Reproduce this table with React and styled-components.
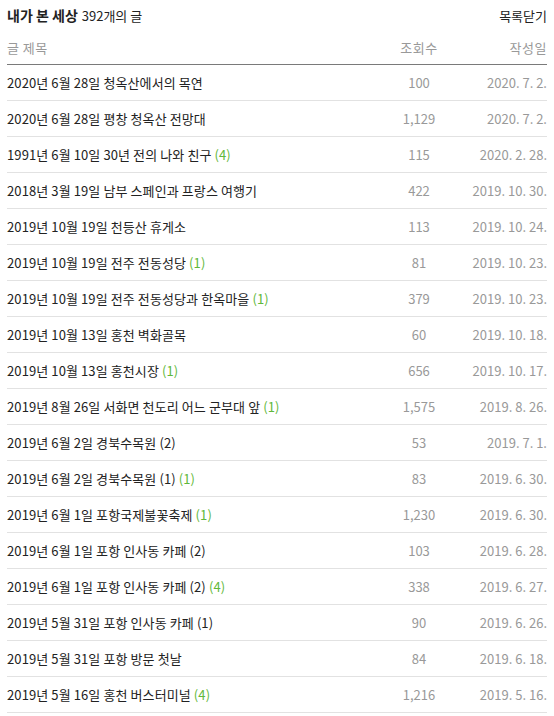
import styled, { createGlobalStyle } from 'styled-components';

const GlobalStyle = createGlobalStyle`
    body {
        margin: 0;
        background: #fff;
        font-family: "Noto Sans CJK KR", "Noto Sans", sans-serif;
        font-size: 13px;
        color: #333;
    }
`;

const posts = [
    { title: '2020년 6월 28일 청옥산에서의 목연', views: '100', date: '2020. 7. 2.' },
    { title: '2020년 6월 28일 평창 청옥산 전망대', views: '1,129', date: '2020. 7. 2.' },
    { title: '1991년 6월 10일 30년 전의 나와 친구', comments: 4, views: '115', date: '2020. 2. 28.' },
    { title: '2018년 3월 19일 남부 스페인과 프랑스 여행기', views: '422', date: '2019. 10. 30.' },
    { title: '2019년 10월 19일 천등산 휴게소', views: '113', date: '2019. 10. 24.' },
    { title: '2019년 10월 19일 전주 전동성당', comments: 1, views: '81', date: '2019. 10. 23.' },
    { title: '2019년 10월 19일 전주 전동성당과 한옥마을', comments: 1, views: '379', date: '2019. 10. 23.' },
    { title: '2019년 10월 13일 홍천 벽화골목', views: '60', date: '2019. 10. 18.' },
    { title: '2019년 10월 13일 홍천시장', comments: 1, views: '656', date: '2019. 10. 17.' },
    { title: '2019년 8월 26일 서화면 천도리 어느 군부대 앞', comments: 1, views: '1,575', date: '2019. 8. 26.' },
    { title: '2019년 6월 2일 경북수목원 (2)', views: '53', date: '2019. 7. 1.' },
    { title: '2019년 6월 2일 경북수목원 (1)', comments: 1, views: '83', date: '2019. 6. 30.' },
    { title: '2019년 6월 1일 포항국제불꽃축제', comments: 1, views: '1,230', date: '2019. 6. 30.' },
    { title: '2019년 6월 1일 포항 인사동 카페 (2)', views: '103', date: '2019. 6. 28.' },
    { title: '2019년 6월 1일 포항 인사동 카페 (2)', comments: 4, views: '338', date: '2019. 6. 27.' },
    { title: '2019년 5월 31일 포항 인사동 카페 (1)', views: '90', date: '2019. 6. 26.' },
    { title: '2019년 5월 31일 포항 방문 첫날', views: '84', date: '2019. 6. 18.' },
    { title: '2019년 5월 16일 홍천 버스터미널', comments: 4, views: '1,216', date: '2019. 5. 16.' },
];

const Wrapper = styled.div`
    width: 540px;
    padding: 0 7px;
`;

const TopBar = styled.div`
    display: flex;
    justify-content: space-between;
    align-items: center;
    height: 30px;
`;

const BlogTitle = styled.h2`
    margin: 0;
    font-size: 13px;
    font-weight: normal;
    color: #222;
    strong {
        font-weight: bold;
        font-size: 14px;
        margin-right: 4px;
    }
`;

const CloseLink = styled.a`
    font-size: 13px;
    color: #222;
    cursor: pointer;
`;

const Row = styled.div`
    display: grid;
    grid-template-columns: 1fr 60px 98px;
    align-items: center;
    height: ${(props) => (props.$head ? '33px' : '35px')};
    border-bottom: 1px solid ${(props) => (props.$head ? '#7a7a7a' : '#e2e2e2')};
    padding-top: ${(props) => (props.$head ? '1px' : '0')};
`;

const HeadCell = styled.div`
    color: #999;
    letter-spacing: 0.5px;
    text-align: ${(props) => props.$align};
`;

const TitleCell = styled.div`
    color: #222;
    letter-spacing: 0.1px;
    white-space: nowrap;
    overflow: hidden;
`;

const Count = styled.span`
    color: #5fb83a;
    margin-left: 3px;
`;

const ViewCell = styled.div`
    color: #999;
    text-align: center;
`;

const DateCell = styled.div`
    color: #999;
    text-align: right;
`;

export default function App() {
    return (
        <>
            <GlobalStyle />
            <Wrapper>
                <TopBar>
                    <BlogTitle>
                        <strong>내가 본 세상</strong>392개의 글
                    </BlogTitle>
                    <CloseLink>목록닫기</CloseLink>
                </TopBar>
                <Row $head>
                    <HeadCell $align="left">글 제목</HeadCell>
                    <HeadCell $align="center">조회수</HeadCell>
                    <HeadCell $align="right">작성일</HeadCell>
                </Row>
                {posts.map((post, i) => (
                    <Row key={i}>
                        <TitleCell>
                            {post.title}
                            {post.comments ? <Count>({post.comments})</Count> : null}
                        </TitleCell>
                        <ViewCell>{post.views}</ViewCell>
                        <DateCell>{post.date}</DateCell>
                    </Row>
                ))}
            </Wrapper>
        </>
    );
}
